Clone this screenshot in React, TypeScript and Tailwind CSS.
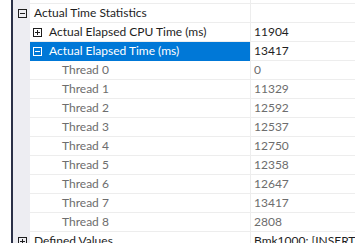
import React from "react";

type Row = {
  label: string;
  value: string;
  level: 1 | 2 | 3;
  box?: "plus" | "minus";
  selected?: boolean;
  gray?: boolean;
};

const rows: Row[] = [
  { label: "Actual Time Statistics", value: "", level: 1, box: "minus" },
  { label: "Actual Elapsed CPU Time (ms)", value: "11904", level: 2, box: "plus" },
  { label: "Actual Elapsed Time (ms)", value: "13417", level: 2, box: "minus", selected: true },
  { label: "Thread 0", value: "0", level: 3, gray: true },
  { label: "Thread 1", value: "11329", level: 3, gray: true },
  { label: "Thread 2", value: "12592", level: 3, gray: true },
  { label: "Thread 3", value: "12537", level: 3, gray: true },
  { label: "Thread 4", value: "12750", level: 3, gray: true },
  { label: "Thread 5", value: "12358", level: 3, gray: true },
  { label: "Thread 6", value: "12647", level: 3, gray: true },
  { label: "Thread 7", value: "13417", level: 3, gray: true },
  { label: "Thread 8", value: "2808", level: 3, gray: true },
  { label: "Defined Values", value: "Bmk1000: [INSERT T", level: 1, box: "plus" },
];

function Box({ kind, selected }: { kind: "plus" | "minus"; selected?: boolean }) {
  const c = selected ? "#ffffff" : "#1e1e1e";
  return (
    <svg width="9" height="9" viewBox="0 0 9 9" className="shrink-0">
      <rect x="0.5" y="0.5" width="8" height="8" fill="none" stroke={c} strokeWidth="1" />
      <line x1="2" y1="4.5" x2="7" y2="4.5" stroke={c} strokeWidth="1" />
      {kind === "plus" && <line x1="4.5" y1="2" x2="4.5" y2="7" stroke={c} strokeWidth="1" />}
    </svg>
  );
}

export default function App() {
  return (
    <div
      className="w-[355px] h-[243px] overflow-hidden bg-white flex text-[12px] leading-[18px]"
      style={{ fontFamily: '"Segoe UI", Lato, "Noto Sans", sans-serif' }}
    >
      <div className="w-[11px] shrink-0 bg-white" />
      <div className="w-[2px] shrink-0 bg-[#2b3148]" />
      <div className="flex-1 flex flex-col">
        {/* partial top row */}
        <div className="flex h-[4px] shrink-0">
          <div className="w-[17px] shrink-0 bg-[#ededf2]" />
          <div className="w-[220px] shrink-0 border-b border-[#ededed]" />
          <div className="flex-1 border-b border-l border-[#ededed]" />
        </div>
        {rows.map((r, i) => (
          <div key={i} className="flex h-[19px] shrink-0">
            <div className="w-[17px] shrink-0 bg-[#ededf2] flex items-center pl-[5px]">
              {r.level === 1 && r.box && <Box kind={r.box} />}
            </div>
            <div
              className={
                "w-[220px] shrink-0 flex items-center border-b " +
                (r.selected ? "bg-[#0078d7] border-[#0078d7] text-white" : "border-[#ededed] ") +
                (r.gray ? " text-[#6d6d6d]" : r.selected ? "" : " text-[#1e1e1e]")
              }
            >
              {r.level === 1 && <span className="pl-[4px] whitespace-nowrap">{r.label}</span>}
              {r.level === 2 && (
                <>
                  <span className="pl-[3px] flex items-center">
                    {r.box && <Box kind={r.box} selected={r.selected} />}
                  </span>
                  <span className="pl-[7px] whitespace-nowrap">{r.label}</span>
                </>
              )}
              {r.level === 3 && <span className="pl-[32px] whitespace-nowrap">{r.label}</span>}
            </div>
            <div
              className={
                "flex-1 flex items-center border-b border-l border-[#ededed] pl-[3px] whitespace-nowrap overflow-hidden " +
                (r.gray ? "text-[#6d6d6d]" : "text-[#1e1e1e]")
              }
            >
              {r.value}
            </div>
          </div>
        ))}
      </div>
    </div>
  );
}
